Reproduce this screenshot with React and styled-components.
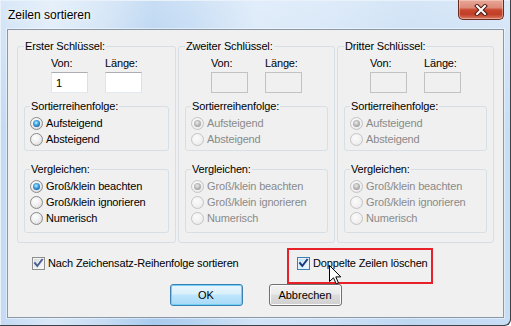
import React from 'react';
import styled, { createGlobalStyle } from 'styled-components';

const Global = createGlobalStyle`
  html, body { margin: 0; padding: 0; background: #ffffff; }
  body { font-family: "Liberation Sans", Arial, sans-serif; font-size: 11px; color: #000; }
  #root { width: 511px; height: 326px; overflow: hidden; }
`;

const Window = styled.div`
  position: relative;
  width: 511px;
  height: 326px;
  box-sizing: border-box;
  display: flex;
  flex-direction: column;
  padding: 0 7px 8px 7px;
  background:
    linear-gradient(180deg, rgba(255,255,255,0.35) 0%, rgba(255,255,255,0) 40%),
    linear-gradient(90deg, #c3daf3 0%, #d9e8f8 10%, #c7ddf4 20%, #a9cbee 30%, #b6d3f1 38%, #d2e4f7 50%, #cce0f6 65%, #bfd8f2 80%, #c8def5 100%);
  box-shadow: inset -1px -1px 0 #3f4348, inset 1px 1px 0 #e9f2fb;
  border-bottom-right-radius: 6px;
  font-family: "Liberation Sans", Arial, sans-serif;
  font-size: 11px;
  letter-spacing: -0.15px;
`;

const TitleBar = styled.div`
  height: 29px;
  flex: none;
  display: flex;
  justify-content: space-between;
  align-items: flex-start;
  padding-left: 1px;
`;

const Title = styled.div`
  padding-top: 8px;
  font-size: 12px;
  line-height: 15px;
  letter-spacing: 0;
  color: #000;
  text-shadow: 0 0 6px rgba(255, 255, 255, 0.95), 0 0 2px rgba(255, 255, 255, 0.9);
`;

const CloseButton = styled.div`
  width: 46px;
  height: 20px;
  box-sizing: border-box;
  border: 1px solid #6b2a20;
  border-top: none;
  border-radius: 0 0 5px 5px;
  background: linear-gradient(180deg, #e8a898 0%, #dd8a78 40%, #c8472f 52%, #c13d26 75%, #d97a63 100%);
  box-shadow: inset 0 0 0 1px rgba(255, 220, 210, 0.45);
  display: flex;
  align-items: center;
  justify-content: center;
`;

const Client = styled.div`
  flex: 1;
  background: #f0f0f0;
  border: 1px solid #8a97a5;
  box-shadow: 0 0 0 1px rgba(255, 255, 255, 0.45);
  padding: 10px 9px 9px 9px;
  display: flex;
  flex-direction: column;
`;

const KeyRow = styled.div`
  display: grid;
  grid-template-columns: 159px 157px 157px;
  column-gap: 2px;
`;

const Group = styled.fieldset`
  margin: ${p => p.$mt || 0}px 0 0 0;
  min-width: 0;
  border: 1px solid #d5dfe5;
  border-radius: 3px;
  padding: ${p => p.$pt || 0}px ${p => p.$px}px ${p => p.$pb}px;
  display: flex;
  flex-direction: column;
`;

const Legend = styled.legend`
  padding: 0 1px;
  margin: 0;
  line-height: 13px;
  color: #000;
`;

const Fields = styled.div`
  display: flex;
  justify-content: center;
  gap: 17px;
  margin-top: 4px;
`;

const Field = styled.div`
  display: flex;
  flex-direction: column;
  gap: 2px;
`;

const FieldLabel = styled.div`
  line-height: 13px;
  color: #000;
`;

const TextBox = styled.input`
  appearance: none;
  width: 37px;
  height: 21px;
  box-sizing: border-box;
  margin: 0;
  padding: 0 4px;
  font: inherit;
  letter-spacing: 0;
  color: #000;
  outline: none;
  border: 1px solid;
  border-color: ${p => (p.disabled ? '#c2c2c2' : '#abadb3 #dbdfe6 #e3e9ef #e2e3ea')};
  background: ${p => (p.disabled ? '#f0f0f0' : '#ffffff')};
`;

const OptionRow = styled.div`
  height: 16px;
  display: flex;
  align-items: center;
  gap: 3px;
  color: ${p => (p.$disabled ? '#8a8a8a' : '#000')};
  white-space: nowrap;
`;

const RadioCircle = styled.span`
  flex: none;
  width: 13px;
  height: 13px;
  box-sizing: border-box;
  border-radius: 50%;
  border: 1px solid ${p => (p.$disabled ? '#c4c4c4' : '#8b8b8b')};
  background: ${p =>
    p.$disabled
      ? 'radial-gradient(circle at 40% 35%, #fbfbfb 0%, #f1f1f1 55%, #e2e2e2 100%)'
      : 'radial-gradient(circle at 40% 35%, #ffffff 0%, #f0f0f0 45%, #cfcfcf 100%)'};
  display: flex;
  align-items: center;
  justify-content: center;

  &::after {
    content: '';
    display: ${p => (p.$checked ? 'block' : 'none')};
    width: 7px;
    height: 7px;
    border-radius: 50%;
    background: ${p =>
      p.$disabled
        ? 'radial-gradient(circle at 45% 40%, #eeeeee 0%, #b9b9b9 45%, #8d8d8d 100%)'
        : 'radial-gradient(circle at 45% 40%, #c9efff 0%, #49aee9 35%, #1a62a4 75%, #0d3d73 100%)'};
  }
`;

const CheckBoxBox = styled.span`
  flex: none;
  width: 13px;
  height: 13px;
  box-sizing: border-box;
  border: 1px solid ${p => (p.$hover ? '#3c7fb1' : '#8e8f8f')};
  background: ${p =>
    p.$hover
      ? 'linear-gradient(135deg, #b9dcf5 0%, #dcefff 50%, #f4faff 100%)'
      : 'linear-gradient(135deg, #cfd3d8 0%, #eceef0 50%, #fbfbfb 100%)'};
  box-shadow: inset 0 0 0 1px ${p => (p.$hover ? '#e6f3fd' : '#f4f4f4')};
  position: relative;

  svg {
    position: absolute;
    left: 0;
    top: 0;
  }
`;

const KeyRadios = styled.div`
  display: flex;
  flex-direction: column;
`;

const Options = styled.div`
  display: grid;
  grid-template-columns: 255px 146px;
  margin-top: 5px;
  padding-left: 15px;
  height: 36px;
`;

const CheckLabel = styled.div`
  display: flex;
  align-items: center;
  gap: 3px;
  height: 13px;
  line-height: 13px;
  white-space: nowrap;
  margin-top: ${p => p.$mt || 0}px;
`;

const Highlight = styled.div`
  position: relative;
  width: 146px;
  height: 36px;
  box-sizing: border-box;
  border: 2px solid #e8202a;
  padding: 7px 0 0 8px;
`;

const Cursor = styled.svg`
  position: absolute;
  left: 40px;
  top: 15px;
`;

const Buttons = styled.div`
  display: flex;
  justify-content: center;
  gap: 26px;
`;

const Button = styled.button`
  width: 73px;
  height: 22px;
  box-sizing: border-box;
  margin: 0;
  padding: 0 0 1px;
  font: inherit;
  letter-spacing: 0;
  color: #000;
  border-radius: 3px;
  border: 1px solid ${p => (p.$default ? '#3c7fb1' : '#707070')};
  background: ${p =>
    p.$default
      ? 'linear-gradient(180deg, #eaf6fd 0%, #d9f0fc 45%, #bee6fd 50%, #a7d9f5 100%)'
      : 'linear-gradient(180deg, #f2f2f2 0%, #ebebeb 45%, #dddddd 50%, #cfcfcf 100%)'};
  box-shadow: inset 0 0 0 1px ${p => (p.$default ? '#6fd2f6' : '#fbfbfb')};
`;

function Radio({ checked, disabled, children }) {
  return (
    <OptionRow $disabled={disabled}>
      <RadioCircle $checked={checked} $disabled={disabled} />
      <span>{children}</span>
    </OptionRow>
  );
}

function CheckMark({ color }) {
  return (
    <svg width="11" height="11" viewBox="0 0 11 11">
      <path d="M2 5.2 L4.3 8 L9 1.8" fill="none" stroke={color} strokeWidth="2" strokeLinecap="square" />
    </svg>
  );
}

function KeyGroup({ title, enabled }) {
  const dis = !enabled;
  return (
    <Group $px={6} $pb={9}>
      <Legend>{title}</Legend>
      <Fields>
        <Field>
          <FieldLabel>Von:</FieldLabel>
          <TextBox disabled={dis} readOnly defaultValue={enabled ? '1' : ''} />
        </Field>
        <Field>
          <FieldLabel>Länge:</FieldLabel>
          <TextBox disabled={dis} readOnly defaultValue="" />
        </Field>
      </Fields>
      <Group $px={5} $pt={2} $pb={3} $mt={7}>
        <Legend>Sortierreihenfolge:</Legend>
        <KeyRadios>
          <Radio checked disabled={dis}>Aufsteigend</Radio>
          <Radio disabled={dis}>Absteigend</Radio>
        </KeyRadios>
      </Group>
      <Group $px={5} $pt={2} $pb={6} $mt={12}>
        <Legend>Vergleichen:</Legend>
        <KeyRadios>
          <Radio checked disabled={dis}>Groß/klein beachten</Radio>
          <Radio disabled={dis}>Groß/klein ignorieren</Radio>
          <Radio disabled={dis}>Numerisch</Radio>
        </KeyRadios>
      </Group>
    </Group>
  );
}

export default function App() {
  return (
    <>
      <Global />
      <Window>
        <TitleBar>
          <Title>Zeilen sortieren</Title>
          <CloseButton>
            <svg width="14" height="12" viewBox="0 0 14 12">
              <path d="M3 2 L11 10 M11 2 L3 10" stroke="#4a1a12" strokeWidth="4" strokeLinecap="square" />
              <path d="M3 2 L11 10 M11 2 L3 10" stroke="#ffffff" strokeWidth="2" strokeLinecap="square" />
            </svg>
          </CloseButton>
        </TitleBar>
        <Client>
          <KeyRow>
            <KeyGroup title="Erster Schlüssel:" enabled />
            <KeyGroup title="Zweiter Schlüssel:" />
            <KeyGroup title="Dritter Schlüssel:" />
          </KeyRow>
          <Options>
            <CheckLabel $mt={9}>
              <CheckBoxBox>
                <CheckMark color="#4a5f97" />
              </CheckBoxBox>
              <span>Nach Zeichensatz-Reihenfolge sortieren</span>
            </CheckLabel>
            <Highlight>
              <CheckLabel>
                <CheckBoxBox $hover>
                  <CheckMark color="#1b3a7a" />
                </CheckBoxBox>
                <span>Doppelte Zeilen löschen</span>
              </CheckLabel>
              <Cursor width="13" height="20" viewBox="0 0 13 20">
                <path
                  d="M0.5 0.5 L0.5 16.5 L4.5 12.8 L7.2 18.8 L9.4 17.8 L6.8 11.9 L11.8 11.9 Z"
                  fill="#ffffff"
                  stroke="#000000"
                  strokeWidth="1"
                  strokeLinejoin="miter"
                />
              </Cursor>
            </Highlight>
          </Options>
          <Buttons>
            <Button $default>OK</Button>
            <Button>Abbrechen</Button>
          </Buttons>
        </Client>
      </Window>
    </>
  );
}
